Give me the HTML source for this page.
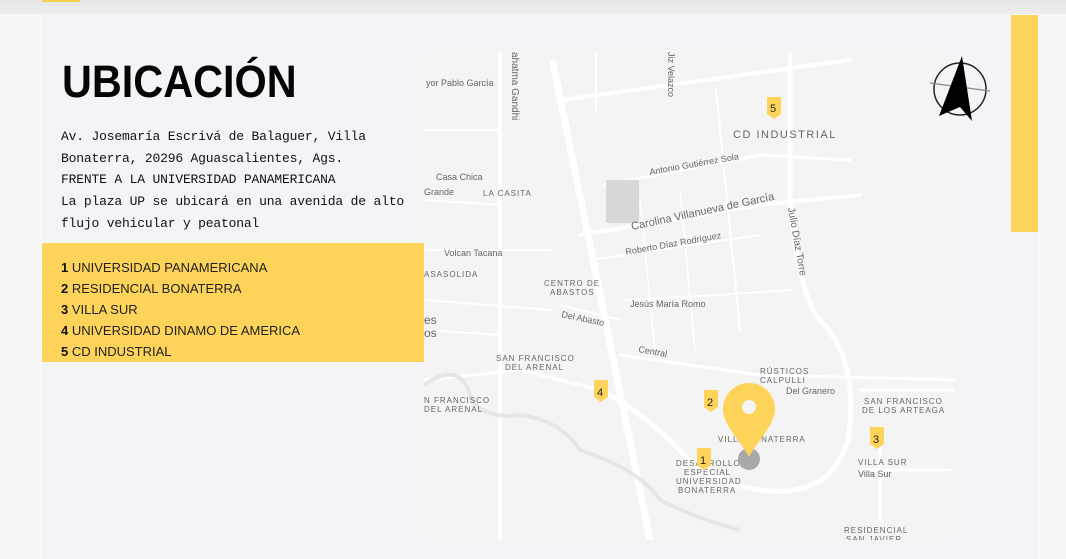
<!DOCTYPE html>
<html><head><meta charset="utf-8"><style>
*{margin:0;padding:0;box-sizing:border-box}
body{width:1066px;height:559px;overflow:hidden;background:#f8f8f9;position:relative;font-family:"Liberation Sans",sans-serif}
.topband{position:absolute;left:0;top:0;width:1066px;height:14px;background:linear-gradient(#e6e6e7,#eeeeef)}
.topy{position:absolute;left:42px;top:0;width:38px;height:2px;background:#f7cf4f}
.card{position:absolute;left:42px;top:15px;width:996px;height:544px;background:#f3f4f8}
h1{position:absolute;left:62px;top:56px;font-size:45px;font-weight:bold;color:#050505;transform:scaleX(0.92);transform-origin:left}
.addr{position:absolute;left:61px;top:126px;font-family:"Liberation Mono",monospace;font-size:13px;line-height:21.7px;color:#111;letter-spacing:-0.18px}
.list{position:absolute;left:42px;top:243px;width:382px;height:119px;background:#fdd35a;padding:14px 0 0 19px;font-size:13px;line-height:21px;color:#222}
.list b{color:#111}
.ybar{position:absolute;left:1011px;top:15px;width:27px;height:217px;background:#fdd35a}
.map{position:absolute;left:424px;top:52px;width:531px;height:488px}
.comp{position:absolute;left:925px;top:52px;width:70px;height:75px}
</style></head><body>
<div class="topband"></div><div class="topy"></div>
<div class="card"></div>
<h1>UBICACIÓN</h1>
<div class="addr">Av. Josemaría Escrivá de Balaguer, Villa<br>Bonaterra, 20296 Aguascalientes, Ags.<br>FRENTE A LA UNIVERSIDAD PANAMERICANA<br>La plaza UP se ubicará en una avenida de alto<br>flujo vehicular y peatonal</div>
<div class="list"><b>1</b> UNIVERSIDAD PANAMERICANA<br><b>2</b> RESIDENCIAL BONATERRA<br><b>3</b> VILLA SUR<br><b>4</b> UNIVERSIDAD DINAMO DE AMERICA<br><b>5</b> CD INDUSTRIAL</div>
<div class="ybar"></div>
<svg class="map" viewBox="424 52 531 488" width="531" height="488">
<rect x="424" y="52" width="531" height="488" fill="#f4f4f4"/>
<g stroke="#fff" fill="none" stroke-linecap="round">
<path d="M553 63 L650 540" stroke-width="7"/>
<path d="M500 52 L500 540" stroke-width="4"/>
<path d="M596 52 L596 110" stroke-width="2"/>
<path d="M562 100 L720 78 L850 60" stroke-width="4"/>
<path d="M790 52 L790 200" stroke-width="3"/>
<path d="M605 185 L760 155 L850 160" stroke-width="3"/>
<path d="M580 235 L760 205 L860 195" stroke-width="4"/>
<path d="M590 260 L760 235" stroke-width="2"/>
<path d="M680 190 L695 350 M640 200 L655 350" stroke-width="1.5"/>
<path d="M716 90 L740 330" stroke-width="2"/>
<path d="M790 60 L790 200 Q800 300 820 320 Q860 360 848 440 Q830 500 760 490 Q700 480 680 450 Q640 410 600 390" stroke-width="5"/>
<path d="M620 355 L760 375 L955 380" stroke-width="3"/>
<path d="M424 250 L550 250 M424 300 L550 310 M560 305 L620 320" stroke-width="2"/>
<path d="M424 380 L520 370 L560 380 L600 390" stroke-width="3"/>
<path d="M625 300 L720 295 L790 290" stroke-width="2"/>
<path d="M860 390 L955 390 M860 470 L950 470 M880 430 L880 520" stroke-width="3"/>
<path d="M424 130 L500 130 M424 200 L500 205 M424 330 L500 335" stroke-width="2"/>
</g>
<path d="M424 385 Q460 360 470 395 Q480 420 520 415 Q560 420 580 450 Q640 470 660 500 Q700 520 740 530" stroke="#e6e6e6" stroke-width="4" fill="none"/>
<rect x="606" y="180" width="33" height="43" fill="#d8d8d8"/>
<g font-family="Liberation Sans,sans-serif" font-size="9" fill="#666">
<text x="426" y="86">yor Pablo García</text>
<text x="436" y="180">Casa Chica</text>
<text x="424" y="195">Grande</text>
<text x="483" y="196" letter-spacing="1" font-size="8">LA CASITA</text>
<text x="444" y="256">Volcan Tacana</text>
<text x="424" y="277" letter-spacing="1" font-size="8">ASASOLIDA</text>
<text x="544" y="286" letter-spacing="1" font-size="8">CENTRO DE</text>
<text x="550" y="295" letter-spacing="1" font-size="8">ABASTOS</text>
<text x="630" y="307">Jesús María Romo</text>
<text x="561" y="317" transform="rotate(12 561 317)">Del Abasto</text>
<text x="638" y="352" transform="rotate(10 638 352)">Central</text>
<text x="496" y="361" letter-spacing="1" font-size="8">SAN FRANCISCO</text>
<text x="505" y="370" letter-spacing="1" font-size="8">DEL ARENAL</text>
<text x="424" y="403" letter-spacing="1" font-size="8">N FRANCISCO</text>
<text x="424" y="412" letter-spacing="1" font-size="8">DEL ARENAL</text>
<text x="424" y="324" font-size="12">es</text><text x="424" y="337" font-size="12">os</text>
<text x="650" y="175" transform="rotate(-10 650 175)">Antonio Gutiérrez Sola</text>
<text x="632" y="230" font-size="11" transform="rotate(-12 632 230)">Carolina Villanueva de García</text>
<text x="626" y="255" transform="rotate(-10 626 255)">Roberto Díaz Rodríguez</text>
<text x="788" y="208" font-size="10" transform="rotate(80 788 208)">Julio Díaz Torre</text>
<text x="512" y="52" font-size="10" transform="rotate(90 512 52)">ahatma Gandhi</text>
<text x="668" y="52" transform="rotate(90 668 52)">Jiz Velazco</text>
<text x="733" y="138" font-size="11" letter-spacing="1.5">CD INDUSTRIAL</text>
<text x="760" y="374" letter-spacing="1" font-size="8">RÚSTICOS</text>
<text x="760" y="383" letter-spacing="1" font-size="8">CALPULLI</text>
<text x="786" y="394">Del Granero</text>
<text x="718" y="442" letter-spacing="1" font-size="8">VILLA BONATERRA</text>
<text x="864" y="404" letter-spacing="1" font-size="8">SAN FRANCISCO</text>
<text x="862" y="413" letter-spacing="1" font-size="8">DE LOS ARTEAGA</text>
<text x="858" y="465" letter-spacing="1" font-size="8">VILLA SUR</text>
<text x="858" y="477">Villa Sur</text>
<text x="676" y="466" letter-spacing="1" font-size="8">DESARROLLO</text>
<text x="684" y="475" letter-spacing="1" font-size="8">ESPECIAL</text>
<text x="676" y="484" letter-spacing="1" font-size="8">UNIVERSIDAD</text>
<text x="678" y="493" letter-spacing="1" font-size="8">BONATERRA</text>
<text x="844" y="533" letter-spacing="1" font-size="8">RESIDENCIAL</text>
<text x="846" y="542" letter-spacing="1" font-size="8">SAN JAVIER</text>
</g>
<g font-family="Liberation Sans,sans-serif" font-size="11" fill="#222">
<path d="M767 97h14v17l-7 5-7-5z" fill="#fdd35a"/><text x="770" y="112">5</text>
<path d="M594 380h14v17l-7 5-7-5z" fill="#fdd35a"/><text x="597" y="396">4</text>
<path d="M704 390h14v17l-7 5-7-5z" fill="#fdd35a"/><text x="707" y="406">2</text>
<path d="M870 427h14v17l-7 5-7-5z" fill="#fdd35a"/><text x="873" y="443">3</text>
<path d="M697 448h14v17l-7 5-7-5z" fill="#fdd35a"/><text x="700" y="464">1</text>
</g>
<circle cx="749" cy="459" r="11" fill="#a9a9a9"/>
<path d="M749 457 C740 440 723 425 723 409 A26 26 0 0 1 775 409 C775 425 758 440 749 457Z" fill="#fdd35a"/>
<circle cx="749" cy="407" r="7" fill="#f4f4f4"/>
</svg>
<svg class="comp" viewBox="925 52 70 75" width="70" height="75">
<circle cx="960" cy="89" r="26" fill="none" stroke="#222" stroke-width="1.5"/>
<path d="M930 83 L990 91" stroke="#888" stroke-width="1.2"/>
<path d="M962 56 L972 121 L960 107 L939 116 Z" fill="#000"/>
</svg>
</body></html>
